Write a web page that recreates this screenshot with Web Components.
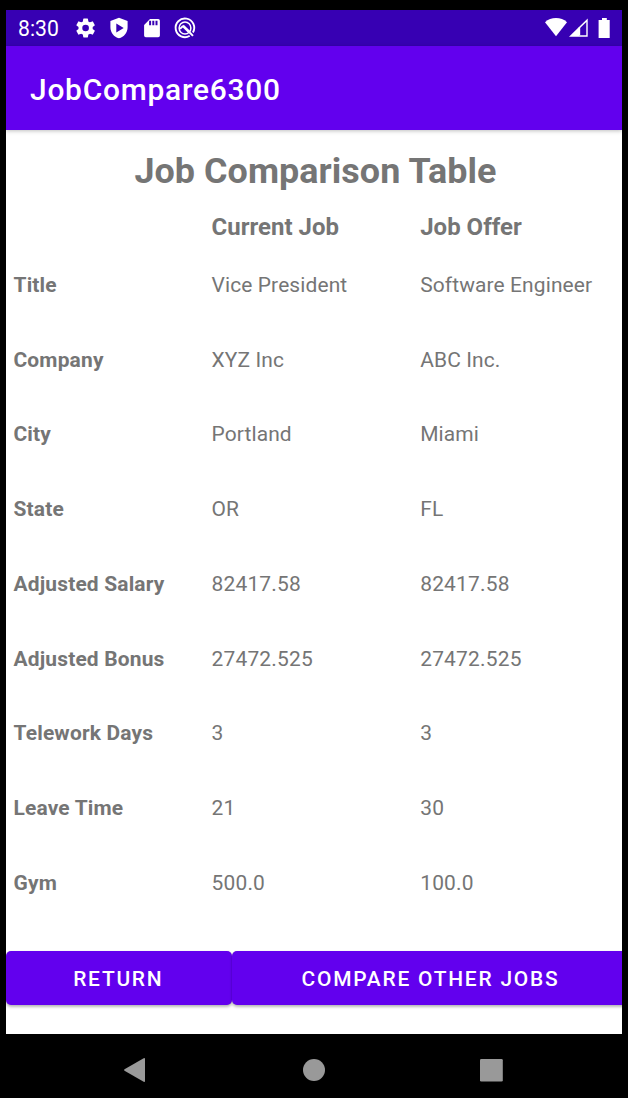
<!DOCTYPE html>
<html lang="en">
<head>
<meta charset="utf-8">
<title>JobCompare6300</title>
<style>
html,body{margin:0;height:100%;background:#000;overflow:hidden}
body{font-family:Roboto,"Liberation Sans",sans-serif}
</style>
</head>
<body>
<phone-screen>
  <status-bar slot="status" time="8:30"></status-bar>
  <app-bar slot="bar">JobCompare6300</app-bar>
  <comparison-table heading="Job Comparison Table"></comparison-table>
  <action-row>
    <material-button style="width:225.6px">RETURN</material-button>
    <material-button style="width:398px">COMPARE OTHER JOBS</material-button>
  </action-row>
  <nav-bar slot="nav"></nav-bar>
</phone-screen>
<script>
const define = (name, html, setup) => customElements.define(name, class extends HTMLElement {
  constructor() {
    super();
    this.attachShadow({ mode: 'open' }).innerHTML = html;
  }
  connectedCallback() { if (setup) setup(this, this.shadowRoot); }
});

define('phone-screen', `
<style>
:host{display:flex;flex-direction:column;box-sizing:border-box;width:628px;height:1098px;padding:10px 6px 0;background:#000}
main{height:904px;background:#fff;overflow:hidden;flex:none}
</style>
<slot name="status"></slot><slot name="bar"></slot>
<main><slot></slot></main>
<slot name="nav"></slot>`);

define('status-bar', `
<style>
:host{display:flex;align-items:center;justify-content:space-between;box-sizing:border-box;height:36px;flex:none;padding:0 11px 0 12px;background:#3700b3;color:#fff;font-size:21.2px;line-height:36px}
.left,.right{display:flex;align-items:center;height:36px}
.time{width:56px;padding-top:1px}
svg{display:block;fill:#fff;flex:none}
</style>
<div class="left">
  <span class="time"></span>
  <svg width="24" height="24" viewBox="0 0 24 24"><path d="M19.43 12.98c.04-.32.07-.64.07-.98s-.03-.66-.07-.98l2.11-1.65a.5.5 0 0 0 .12-.64l-2-3.46a.5.5 0 0 0-.61-.22l-2.49 1a7.3 7.3 0 0 0-1.69-.98l-.38-2.65A.49.49 0 0 0 14 2h-4a.49.49 0 0 0-.49.42l-.38 2.65c-.61.25-1.17.59-1.69.98l-2.49-1a.5.5 0 0 0-.61.22l-2 3.46a.49.49 0 0 0 .12.64l2.11 1.65a7.9 7.9 0 0 0 0 1.96l-2.11 1.65a.5.5 0 0 0-.12.64l2 3.46c.12.22.39.3.61.22l2.49-1c.52.4 1.08.73 1.69.98l.38 2.65c.03.24.24.42.49.42h4c.25 0 .46-.18.49-.42l.38-2.65a7.3 7.3 0 0 0 1.69-.98l2.49 1c.23.09.49 0 .61-.22l2-3.46a.5.5 0 0 0-.12-.64zM12 15.500a3.500 3.500 0 1 1 0-7 3.500 3.500 0 0 1 0 7z" transform="translate(.2 .6) scale(.95)"/></svg>
  <svg width="24" height="24" viewBox="0 0 24 24" style="margin-left:9px"><path fill-rule="evenodd" d="M12 1.800 3.400 5v6.200c0 5.300 3.600 9.800 8.600 11.100 5-1.300 8.600-5.800 8.600-11.100V5zM9.300 7.600v8.800l7.400-4.400z"/></svg>
  <svg width="24" height="24" viewBox="0 0 24 24" style="margin-left:9px"><path fill-rule="evenodd" d="M18.200 3H10L4.100 9v10.500a1.700 1.700 0 0 0 1.700 1.700h12.400a1.700 1.700 0 0 0 1.700-1.700V4.700A1.700 1.700 0 0 0 18.200 3zM9.100 4.800h2v4.400h-2zm3.200 0h2v4.400h-2zm3.200 0h2v4.400h-2z"/></svg>
  <svg width="24" height="24" viewBox="0 0 24 24" style="margin-left:9px"><g fill="none" stroke="#fff"><path d="M16.700 19.800A9.300 9.300 0 1 1 19.900 16.600" stroke-width="1.900"/><path d="M16.400 16.300 20 19.900" stroke-width="2"/><circle cx="12" cy="12" r="5.900" stroke-width="1.500"/><path d="M9.800 9.600 16 15.800" stroke-width="2.700"/><path d="M7 12.800 10 10" stroke-width="1.800"/></g></svg>
</div>
<div class="right">
  <svg width="66" height="24" viewBox="0 0 66 24"><path d="M0 6.300C3 3.500 6.800 2.100 11 2.100s8 1.400 11 4.200L11 20.200z"/><path fill-rule="evenodd" d="M42.700 2.400v18.300H24L42.700 2.400zM41.300 6 34 13.100V19.300h7.300z"/><path d="M33.500 11.500h1.700v8h-1.700z"/><path d="M57 2h4.800v1.900h2.900v18H53.600v-18H57z"/></svg>
</div>`, (el, root) => { root.querySelector('.time').textContent = el.getAttribute('time'); });

define('app-bar', `
<style>
:host{display:block;box-sizing:border-box;height:84px;flex:none;padding:2px 24px 0;background:#6200ee;color:#fff;font-size:29.9px;font-weight:500;line-height:84px;letter-spacing:.77px;box-shadow:0 1px 4px rgba(0,0,0,.25);position:relative;white-space:nowrap}
</style><slot></slot>`);

define('comparison-table', `
<style>
:host{display:block;color:#757575;font-size:20.95px;letter-spacing:.12px}
h1{margin:0;padding:17px 0 0 3px;height:58px;line-height:48px;font-size:35.9px;font-weight:700;letter-spacing:.06px;text-align:center}
.row{display:grid;grid-template-columns:198px 208.700px 1fr;height:74.780px;align-items:center;padding-left:7.500px;white-space:nowrap;line-height:26px}
.head{height:42.500px;line-height:30px;font-size:23.940px;font-weight:700;letter-spacing:.03px}
.head span{padding-top:2px}
.label{font-weight:700;letter-spacing:.17px}
.num{letter-spacing:.2px}
</style>
<h1></h1>
<section></section>`, (el, root) => {
  root.querySelector('h1').textContent = el.getAttribute('heading');
  const rows = [
    ['', 'Current Job', 'Job Offer'],
    ['Title', 'Vice President', 'Software Engineer'],
    ['Company', 'XYZ Inc', 'ABC Inc.'],
    ['City', 'Portland', 'Miami'],
    ['State', 'OR', 'FL'],
    ['Adjusted Salary', '82417.58', '82417.58'],
    ['Adjusted Bonus', '27472.525', '27472.525'],
    ['Telework Days', '3', '3'],
    ['Leave Time', '21', '30'],
    ['Gym', '500.0', '100.0']
  ];
  const cell = t => `<span${/^\d/.test(t) ? ' class="num"' : ''}>${t}</span>`;
  root.querySelector('section').innerHTML = rows.map((r, i) =>
    `<div class="row${i ? '' : ' head'}"><span class="label">${r[0]}</span>${cell(r[1])}${cell(r[2])}</div>`).join('');
});

define('action-row', `
<style>:host{display:flex;gap:.4px;padding-top:30.400px}</style><slot></slot>`);

define('material-button', `
<style>
:host{display:flex;flex:none;align-items:center;justify-content:center;box-sizing:border-box;height:54.500px;padding:1px 1px 0 0;border-radius:5px;background:#6200ee;color:#fff;font-size:20.95px;font-weight:500;letter-spacing:1.77px;box-shadow:0 2px 3px rgba(0,0,0,.28),0 0 1px rgba(0,0,0,.15)}
</style><slot></slot>`);

define('nav-bar', `
<style>
:host{display:flex;height:64px;flex:none;background:#000}
svg{display:block;fill:#999;flex:none}
</style>
<svg width="616" height="64" viewBox="0 0 616 64"><path d="M118.500 35.200 137.700 24.200Q139 23.600 139 25v22q0 1.400-1.300.8L118.500 36.800q-1-.8 0-1.600z"/><circle cx="308" cy="36" r="11"/><rect x="474" y="25" width="22.800" height="22.500" rx="1.300"/></svg>`);
</script>
</body>
</html>
